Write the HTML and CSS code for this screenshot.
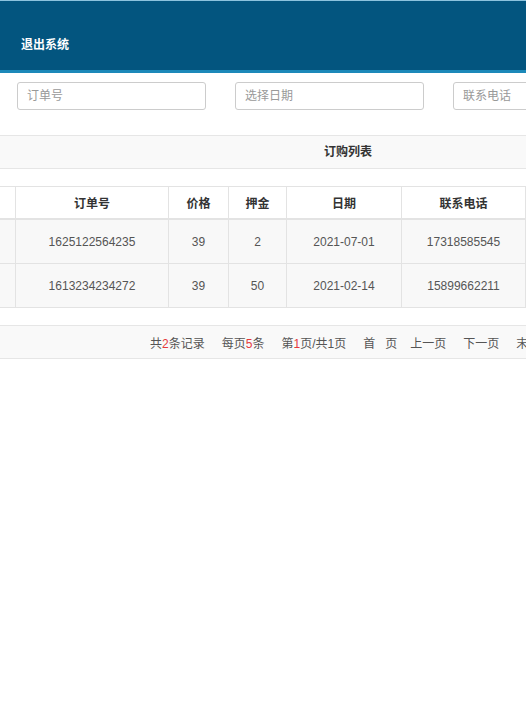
FILE: index.html
```html
<!DOCTYPE html>
<html lang="zh-CN">
<head>
<meta charset="utf-8">
<title>订购列表</title>
<link rel="stylesheet" href="styles.css">
</head>
<body>
<div class="page">
  <div class="header"><span class="logout">退出系统</span></div>
  <div class="search">
    <input class="field" type="text" placeholder="订单号">
    <input class="field" type="text" placeholder="选择日期">
    <input class="field" type="text" placeholder="联系电话">
  </div>
  <div class="titlebar">订购列表</div>
  <div class="table-wrap">
    <table class="list">
      <thead>
        <tr>
          <th class="c0"></th>
          <th class="c1">订单号</th>
          <th class="c2">价格</th>
          <th class="c3">押金</th>
          <th class="c4">日期</th>
          <th class="c5">联系电话</th>
          <th class="c6"></th>
        </tr>
      </thead>
      <tbody>
        <tr>
          <td></td>
          <td>1625122564235</td>
          <td>39</td>
          <td>2</td>
          <td>2021-07-01</td>
          <td>17318585545</td>
          <td></td>
        </tr>
        <tr>
          <td></td>
          <td>1613234234272</td>
          <td>39</td>
          <td>50</td>
          <td>2021-02-14</td>
          <td>15899662211</td>
          <td></td>
        </tr>
      </tbody>
    </table>
  </div>
  <div class="pager">
    <span>共<em>2</em>条记录</span>
    <span>每页<em>5</em>条</span>
    <span>第<em>1</em>页/共1页</span>
    <span class="wide">首&nbsp;&nbsp;&nbsp;页</span>
    <span>上一页</span>
    <span>下一页</span>
    <span>末&nbsp;&nbsp;&nbsp;页</span>
  </div>
</div>
</body>
</html>
```
FILE: styles.css
```css
html, body {
  margin: 0;
  padding: 0;
  background: #fff;
  overflow: hidden;
}
.page {
  width: 526px;
  height: 702px;
  overflow: hidden;
  font-family: "Liberation Sans", "Noto Sans CJK SC", sans-serif;
  font-size: 12px;
  color: #555;
}
.header {
  height: 69px;
  background: #03557f;
  border-top: 1px solid #8cc3de;
  border-bottom: 3px solid #1c89b9;
  box-sizing: content-box;
  padding-left: 21px;
  display: flex;
  align-items: center;
}
.logout {
  color: #fff;
  font-weight: bold;
  font-size: 12px;
  margin-top: 16px;
}
.search {
  display: flex;
  gap: 29px;
  padding: 9px 0 0 17px;
  width: 800px;
}
.field {
  box-sizing: border-box;
  width: 189px;
  height: 28px;
  border: 1px solid #ccc;
  border-radius: 3px;
  padding: 0 9px;
  font-family: "Liberation Sans", "Noto Sans CJK SC", sans-serif;
  font-size: 12px;
  color: #555;
  outline: none;
  flex: none;
}
.field::placeholder {
  color: #999;
}
.titlebar {
  margin-top: 25px;
  width: 696px;
  height: 32px;
  line-height: 32px;
  background: #f9f9f9;
  border-top: 1px solid #e6e6e6;
  border-bottom: 1px solid #e6e6e6;
  text-align: center;
  font-weight: bold;
  color: #333;
}
.table-wrap {
  margin-top: 17px;
  margin-left: -45px;
  width: 900px;
}
.list {
  border-collapse: collapse;
  table-layout: fixed;
}
.list th, .list td {
  border: 1px solid #e3e3e3;
  text-align: center;
  padding: 0;
}
.list th {
  height: 31px;
  font-weight: bold;
  color: #333;
  background: #fff;
  border-bottom: 2px solid #e3e3e3;
}
.list td {
  height: 43px;
  background: #f8f8f8;
  color: #555;
}
.c0 { width: 59px; }
.c1 { width: 152px; }
.c2 { width: 59px; }
.c3 { width: 57px; }
.c4 { width: 114px; }
.c5 { width: 123px; }
.c6 { width: 120px; }
.pager {
  margin-top: 17px;
  width: 800px;
  height: 32px;
  background: #f9f9f9;
  border-top: 1px solid #e6e6e6;
  border-bottom: 1px solid #e6e6e6;
  display: flex;
  align-items: center;
  gap: 17px;
  padding-left: 150px;
  box-sizing: content-box;
  color: #555;
  white-space: nowrap;
}
.pager .wide {
  margin-right: -4px;
}
.pager em {
  font-style: normal;
  color: #e4393c;
}
```
